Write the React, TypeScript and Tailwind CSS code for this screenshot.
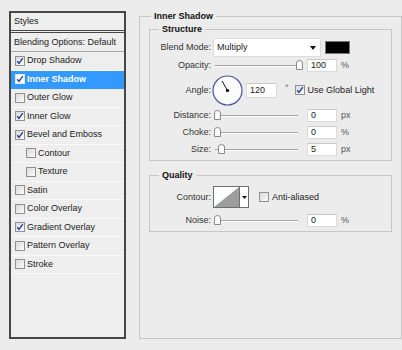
import React from "react";

const items: { label: string; checked?: boolean; active?: boolean; indent?: boolean }[] = [
  { label: "Drop Shadow", checked: true },
  { label: "Inner Shadow", checked: true, active: true },
  { label: "Outer Glow" },
  { label: "Inner Glow", checked: true },
  { label: "Bevel and Emboss", checked: true },
  { label: "Contour", indent: true },
  { label: "Texture", indent: true },
  { label: "Satin" },
  { label: "Color Overlay" },
  { label: "Gradient Overlay", checked: true },
  { label: "Pattern Overlay" },
  { label: "Stroke" },
];

function Check({ checked, light }: { checked?: boolean; light?: boolean }) {
  return (
    <span
      className={
        "w-[10px] h-[10px] border shrink-0 flex items-center justify-center " +
        (light ? "border-[#e0e8f5] bg-white" : "border-[#8f9090] bg-gradient-to-br from-[#d9d9d9] to-[#fbfbfb]")
      }
    >
      {checked && (
        <svg width="8" height="8" viewBox="0 0 8 8">
          <path d="M1.2 4.2 L3 6.4 L6.8 1.2" stroke="#213f9c" strokeWidth="1.4" fill="none" />
        </svg>
      )}
    </span>
  );
}

function Thumb() {
  return (
    <svg width="7" height="10" viewBox="0 0 7 10">
      <path d="M0.5 9.5 V3 Q0.5 0.5 3.5 0.5 Q6.5 0.5 6.5 3 V9.5 Z" fill="#fafafa" stroke="#8a8a8a" />
    </svg>
  );
}

function Slider({ pos }: { pos: number }) {
  return (
    <div className="relative w-[88px] h-[13px] shrink-0">
      <div className="absolute left-[2px] top-[6px] w-[83px] h-[1px] bg-[#a3a3a3]" />
      <div className="absolute left-[2px] top-[7px] w-[83px] h-[1px] bg-white" />
      <div className="absolute top-[1px]" style={{ left: pos }}>
        <Thumb />
      </div>
    </div>
  );
}

function Input({ value, w = 30, h = 13 }: { value: string; w?: number; h?: number }) {
  return (
    <div
      className="bg-white border border-[#dadada] border-t-[#c9c9c9] flex items-center pl-[3px] text-[#222] shrink-0"
      style={{ width: w, height: h }}
    >
      {value}
    </div>
  );
}

function Label({ children }: { children: React.ReactNode }) {
  return <div className="w-[52px] shrink-0 text-right text-[#333]">{children}</div>;
}

function SliderRow({ label, pos, value, unit, mt }: { label: string; pos: number; value: string; unit: string; mt: string }) {
  return (
    <div className={"flex items-center h-[13px] " + mt}>
      <Label>{label}</Label>
      <div className="ml-[2px]">
        <Slider pos={pos} />
      </div>
      <div className="ml-[6px]">
        <Input value={value} />
      </div>
      <div className="ml-[4px] text-[#555]">{unit}</div>
    </div>
  );
}

export default function App() {
  return (
    <div className="w-[402px] h-[350px] bg-[#ececec] flex items-start font-['Liberation_Sans',Arial,sans-serif] text-[9px] leading-none text-[#222] overflow-hidden">
      {/* Left styles panel */}
      <div className="mt-[11px] ml-[9px] w-[118px] h-[328px] border-2 border-[#474747] bg-[#eeeeee] flex flex-col">
        <div className="h-[20px] flex items-center pl-[3px] border-b-[3px] border-double border-[#474747]">Styles</div>
        <div className="h-[19px] flex items-center pl-[3px] border-b border-[#a9a9a9]">Blending Options: Default</div>
        {items.map((it) => (
          <div
            key={it.label}
            className={
              "h-[18.5px] flex items-center gap-[2px] border-b " +
              (it.indent ? "pl-[15px] " : "pl-[4px] ") +
              (it.active ? "bg-[#3399ff] border-[#3399ff] text-white font-bold" : "border-[#f9f9f9]")
            }
          >
            <Check checked={it.checked} light={it.active} />
            <span>{it.label}</span>
          </div>
        ))}
      </div>

      {/* Right: Inner Shadow group */}
      <fieldset className="mt-[10px] ml-[13px] w-[260px] h-[329px] border border-[#c6c6c6] px-[9px]">
        <legend className="ml-[2px] px-[3px] font-bold leading-[12px] text-[#111]">Inner Shadow</legend>

        <fieldset className="mt-[1px] w-[243px] border border-[#c6c6c6] px-[9px] pb-[4px]">
          <legend className="px-[3px] font-bold leading-[12px] text-[#111]">Structure</legend>

          {/* Blend mode */}
          <div className="flex items-center mt-[3px] h-[19px]">
            <Label>Blend Mode:</Label>
            <div className="ml-[2px] w-[108px] h-[19px] bg-white border border-[#dcdcdc] flex items-center justify-between pl-[3px] pr-[4px]">
              <span>Multiply</span>
              <svg width="6" height="4" viewBox="0 0 6 4">
                <path d="M0 0 H6 L3 4 Z" fill="#111" />
              </svg>
            </div>
            <div className="ml-[4px] w-[25px] h-[13px] bg-black border border-[#777]" />
          </div>

          <SliderRow label="Opacity:" pos={83} value="100" unit="%" mt="mt-[2px]" />

          {/* Angle */}
          <div className="flex items-center mt-[3px] h-[30px]">
            <Label>Angle:</Label>
            <svg width="31" height="31" viewBox="0 0 31 31" className="ml-[1px] shrink-0">
              <circle cx="15.5" cy="15.5" r="14.5" fill="#fbfbfb" stroke="#46559a" strokeWidth="1.2" />
              <line x1="15.5" y1="15.5" x2="10" y2="6" stroke="#111" strokeWidth="1" />
              <circle cx="15.5" cy="15.5" r="1.6" fill="#000" />
            </svg>
            <div className="ml-[3px]">
              <Input value="120" w={31} h={15} />
            </div>
            <div className="ml-[8px] self-start mt-[9px] text-[#555]">°</div>
            <div className="ml-[6px]">
              <Check checked />
            </div>
            <span className="ml-[3px]">Use Global Light</span>
          </div>

          <SliderRow label="Distance:" pos={1} value="0" unit="px" mt="mt-[4px]" />
          <SliderRow label="Choke:" pos={1} value="0" unit="%" mt="mt-[4px]" />
          <SliderRow label="Size:" pos={5} value="5" unit="px" mt="mt-[4px]" />
        </fieldset>

        <fieldset className="mt-[8px] w-[243px] border border-[#c6c6c6] px-[9px] pb-[4px]">
          <legend className="px-[3px] font-bold leading-[12px] text-[#111]">Quality</legend>

          <div className="flex items-center mt-[5px] h-[22px]">
            <Label>Contour:</Label>
            <div className="ml-[2px] h-[22px] flex border border-[#6f6f6f] bg-white">
              <svg width="25" height="20" viewBox="0 0 25 20">
                <rect x="0" y="0" width="25" height="20" fill="#fff" />
                <polygon points="0,20 25,0 25,20" fill="#9d9d9d" />
              </svg>
              <div className="w-[9px] border-l border-[#6f6f6f] flex items-center justify-center">
                <svg width="5" height="3" viewBox="0 0 5 3">
                  <path d="M0 0 H5 L2.5 3 Z" fill="#111" />
                </svg>
              </div>
            </div>
            <div className="ml-[10px]">
              <Check />
            </div>
            <span className="ml-[3px]">Anti-aliased</span>
          </div>

          <SliderRow label="Noise:" pos={1} value="0" unit="%" mt="mt-[6px]" />
        </fieldset>
      </fieldset>
    </div>
  );
}
